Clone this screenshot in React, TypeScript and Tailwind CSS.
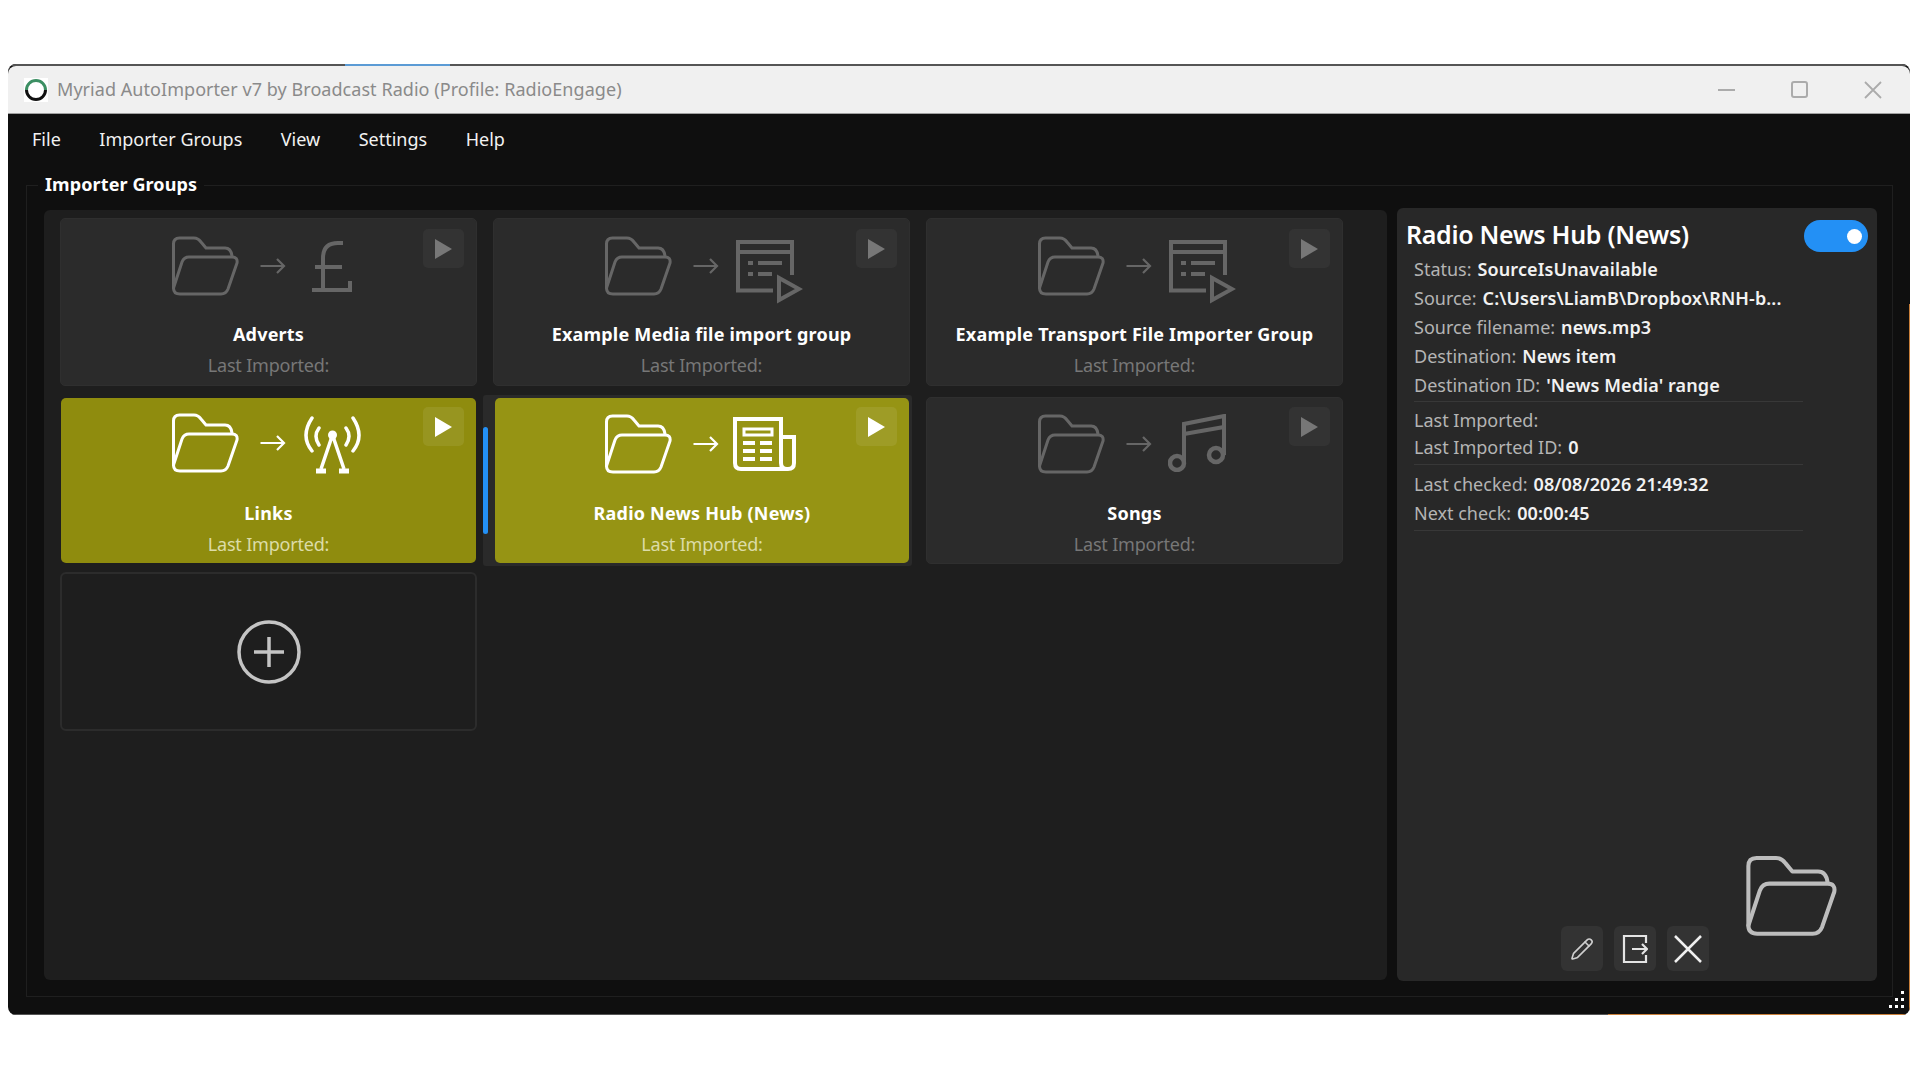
import React from "react";
import { Pencil } from "lucide-react";

function Folder({ className }: { className?: string }) {
  return (
    <svg viewBox="0 0 68 61" className={className} fill="none" stroke="currentColor" strokeWidth="3" strokeLinejoin="round" strokeLinecap="round">
      <path d="M2.500 52 V8 Q2.500 2 8.500 2 H23 Q27 2 30 6 L35 12 H54 Q60 12 61 20" />
      <path d="M18 21 H61 Q67 21 66 27 L57 53 Q55 58 50 58 H9 Q2.500 58 2.500 52 L11 26 Q13 21 18 21 Z" />
    </svg>
  );
}

function Arrow() {
  return (
    <svg viewBox="0 0 26 18" className="w-[26px] h-[18px]" fill="none" stroke="currentColor" strokeWidth="2.200">
      <path d="M0.500 9 H24 M17 2 L24 9 L17 16" />
    </svg>
  );
}

function Pound() {
  return (
    <svg viewBox="0 0 40 53" className="w-[40px] h-[53px]" fill="none" stroke="currentColor" strokeWidth="4">
      <path d="M31 3 H26 Q11 3 11 18 V50" />
      <path d="M3 27 H30" />
      <path d="M0 50 H38 V41" />
    </svg>
  );
}

function Media() {
  return (
    <svg viewBox="0 0 67 64" className="w-[67px] h-[64px]" fill="none" stroke="currentColor" strokeWidth="4">
      <path d="M37 50.500 H2 V2 H56 V35" />
      <path d="M2 12 H56" />
      <path d="M12 23 H17 M22 23 H46 M12 34 H17 M22 34 H36" />
      <path d="M43 38 V60 L63 49 Z" />
    </svg>
  );
}

function News() {
  return (
    <svg viewBox="0 0 63 54" className="w-[63px] h-[54px]" fill="none" stroke="currentColor" strokeWidth="4">
      <path d="M48 20 H61 V46 Q61 52 55 52 H8 Q2 52 2 46 V2 H48 V46 Q48 52 54 52" />
      <path d="M11 12 H39 V18 H11 Z" strokeWidth="3" />
      <path d="M10 26 H22 M27 26 H39 M10 34 H22 M27 34 H39 M10 42 H22 M27 42 H39" strokeWidth="4" />
    </svg>
  );
}

function Antenna() {
  return (
    <svg viewBox="0 0 59 58" className="w-[59px] h-[58px]" fill="none" stroke="currentColor" strokeWidth="3">
      <path d="M9 2 Q-3 20 9 35 M16 12 Q10 20 16 29 M50 2 Q62 20 50 35 M43 12 Q49 20 43 29" strokeLinecap="round" strokeWidth="3.500" />
      <circle cx="29.500" cy="19" r="4.500" fill="currentColor" stroke="none" />
      <path d="M29.500 19 L18 53 M29.500 19 L41 53" strokeWidth="3.500" />
      <path d="M13 55 H23 M36 55 H46" strokeWidth="5" />
    </svg>
  );
}

function Music() {
  return (
    <svg viewBox="0 0 58 58" className="w-[58px] h-[58px]" fill="none" stroke="currentColor" strokeWidth="4">
      <path d="M16 49 V10 L56 2 V41" />
      <path d="M16 20 L56 13" />
      <circle cx="9" cy="49" r="7" strokeWidth="4.500" />
      <circle cx="48" cy="41" r="7" strokeWidth="4.500" />
    </svg>
  );
}

function Play({ active }: { active: boolean }) {
  return (
    <div className={active ? "w-[41px] h-[39px] rounded-[5px] bg-white/8 flex items-center justify-center" : "w-[41px] h-[39px] rounded-[5px] bg-[#333333] flex items-center justify-center"}>
      <svg viewBox="0 0 17 20" className={active ? "w-[17px] h-[20px] text-white" : "w-[17px] h-[20px] text-[#777777]"} fill="currentColor">
        <path d="M0 0 L17 10 L0 20 Z" />
      </svg>
    </div>
  );
}

type Fit = { wrap: string; title: string; play: string };

const ROW_ONE: Fit = { wrap: "flex flex-col items-center h-full pt-[17px] text-[#666666]", title: "mt-[1px]", play: "absolute top-[10px] right-[12px]" };
const LINKS: Fit = { wrap: "flex flex-col items-center h-full pt-[15px] text-white", title: "mt-[3px]", play: "absolute top-[9px] right-[12px]" };
const NEWS: Fit = { wrap: "flex flex-col items-center h-full pt-[16px] text-white", title: "mt-[2px]", play: "absolute top-[9px] right-[12px]" };
const SONGS: Fit = { wrap: "flex flex-col items-center h-full pt-[16px] text-[#666666]", title: "mt-[2px]", play: "absolute top-[9px] right-[12px]" };

function CardBody({ name, icon, active, fit, inset }: { name: string; icon: React.ReactNode; active: boolean; fit: Fit; inset: string }) {
  return (
    <>
      <div className={fit.play}>
        <Play active={active} />
      </div>
      <div className={fit.wrap}>
        <div className={"h-[82px] w-full flex items-start " + inset}>
          <Folder className="w-[68px] h-[61px]" />
          <div className="ml-[21px] mt-[21px]">
            <Arrow />
          </div>
          {icon}
        </div>
        <div className={fit.title + " h-[30px] leading-[30px] text-[18px] font-bold text-white tracking-[0.2px]"}>{name}</div>
        <div className={active ? "mt-[1px] h-[30px] leading-[30px] text-[18px] text-[#dcdca8] tracking-[-0.2px]" : "mt-[1px] h-[30px] leading-[30px] text-[18px] text-[#777777] tracking-[-0.2px]"}>
          Last Imported:
        </div>
      </div>
    </>
  );
}

function Row({ label, value }: { label: string; value?: string }) {
  return (
    <div className="flex h-[29px] items-center text-[18px]">
      <span className="text-[#b4b4b4] mr-[6px]">{label}</span>
      {value && <span className="font-semibold text-[#f2f2f2] tracking-[0.1px]">{value}</span>}
    </div>
  );
}

export default function App() {
  const idle = "relative h-[168px] rounded-[5px] bg-[#2b2b2b] border border-[#2f2f2f]";
  return (
    <div className="w-[1920px] h-[1080px] bg-white pt-[64px] pl-[8px] overflow-hidden font-['Noto_Sans',sans-serif]">
      <div className="relative w-[1902px] h-[951px] bg-[#0f0f0f] rounded-[8px] flex flex-col overflow-hidden">
        <div className="flex h-[2px] bg-[#555555] pl-[337px] shrink-0">
          <div className="w-[105px] bg-[#5b9bd5]" />
        </div>
        <div className="h-[48px] shrink-0 rounded-t-[8px] bg-[#f0f0f0] border-b border-[#a0a0a0] flex items-center pl-[16px]">
          <svg viewBox="0 0 24 24" className="w-[24px] h-[24px] mr-[9px]" fill="none" strokeWidth="3">
            <rect width="24" height="24" fill="#ffffff" />
            <path d="M2.500 12 A9.500 9.500 0 0 1 21.500 12" stroke="#3c8f63" />
            <path d="M21.500 12 A9.500 9.500 0 0 1 2.500 12" stroke="#111111" />
          </svg>
          <span className="text-[18px] text-[#8a8a8a] tracking-[0.05px]">Myriad AutoImporter v7 by Broadcast Radio (Profile: RadioEngage)</span>
          <div className="ml-auto flex items-center text-[#ababab]">
            <svg viewBox="0 0 18 18" className="w-[18px] h-[18px]" fill="none" stroke="currentColor" strokeWidth="2"><path d="M0 9 H17" /></svg>
            <svg viewBox="0 0 18 18" className="w-[18px] h-[18px] ml-[55px]" fill="none" stroke="currentColor" strokeWidth="2"><rect x="1" y="1" width="15" height="15" rx="2" /></svg>
            <svg viewBox="0 0 18 18" className="w-[18px] h-[18px] ml-[55px] mr-[28px]" fill="none" stroke="currentColor" strokeWidth="1.800"><path d="M1 1 L17 17 M17 1 L1 17" /></svg>
          </div>
        </div>

        <div className="h-[51px] shrink-0 flex items-center pl-[24px] text-[18px] text-[#f2f2f2] gap-x-[38.500px]">
          <span>File</span>
          <span>Importer Groups</span>
          <span>View</span>
          <span>Settings</span>
          <span>Help</span>
        </div>

        <div className="relative mx-[18px] mt-[20px] w-[1867px] h-[812px] border border-[#1f1f1f] flex gap-x-[10px] pl-[17px] pt-[22px]">
          <div className="absolute -top-[17px] left-[11px] px-[7px] bg-[#0f0f0f] h-[30px] leading-[30px] text-[18px] font-bold text-white tracking-[0.1px]">Importer Groups</div>

          <div className="w-[1343px] h-[770px] mt-[2px] rounded-[6px] bg-[#1e1e1e] pl-[16px] pt-[8px]">
            <div className="grid grid-cols-[417px_417px_417px] grid-rows-[179px_175px_160px] gap-x-[16px]">
              <div className={idle}>
                <CardBody name="Adverts" active={false} fit={ROW_ONE} inset="pl-[110px]" icon={<div className="ml-[26px] mt-[4px]"><Pound /></div>} />
              </div>
              <div className={idle}>
                <CardBody name="Example Media file import group" active={false} fit={ROW_ONE} inset="pl-[110px]" icon={<div className="ml-[17px] mt-[4px]"><Media /></div>} />
              </div>
              <div className={idle}>
                <CardBody name="Example Transport File Importer Group" active={false} fit={ROW_ONE} inset="pl-[110px]" icon={<div className="ml-[17px] mt-[4px]"><Media /></div>} />
              </div>

              <div className="relative mx-[1px] mt-[1px] h-[165px] rounded-[5px] bg-[#8f8c0e]">
                <CardBody name="Links" active fit={LINKS} inset="pl-[110px]" icon={<div className="ml-[17px] mt-[3px]"><Antenna /></div>} />
              </div>
              <div className="relative -ml-[10px] -mr-[2px] -mt-[2px] h-[171px] rounded-[3px] bg-[#2a2a2a] pl-[12px] pr-[3px] pt-[3px]">
                <div className="absolute left-[0px] top-[32px] w-[5px] h-[107px] rounded-full bg-[#2390f5]" />
                <div className="relative h-[165px] rounded-[5px] bg-[#969414]">
                  <CardBody name="Radio News Hub (News)" active fit={NEWS} inset="pl-[109px]" icon={<div className="ml-[14px] mt-[3px]"><News /></div>} />
                </div>
              </div>
              <div className="relative h-[167px] rounded-[5px] bg-[#2b2b2b] border border-[#2f2f2f]">
                <CardBody name="Songs" active={false} fit={SONGS} inset="pl-[110px]" icon={<div className="ml-[16px]"><Music /></div>} />
              </div>

              <div className="h-[159px] rounded-[6px] border-2 border-[#2c2c2c] flex items-center justify-center">
                <svg viewBox="0 0 64 64" className="w-[64px] h-[64px] text-[#c4c4c4]" fill="none" stroke="currentColor" strokeWidth="3.500">
                  <circle cx="32" cy="32" r="30" />
                  <path d="M17 32 H47 M32 17 V47" />
                </svg>
              </div>
            </div>
          </div>

          <div className="relative w-[480px] h-[773px] rounded-[6px] bg-[#282828] pl-[9px] pt-[8px]">
            <div className="h-[36px] leading-[36px] text-[25px] font-semibold text-white tracking-[-0.3px]">Radio News Hub (News)</div>
            <div className="absolute top-[12px] right-[9px] w-[64px] h-[32px] rounded-full bg-[#2390f5] flex items-center justify-end pr-[6px]">
              <div className="w-[15px] h-[15px] rounded-full bg-white" />
            </div>
            <div className="pl-[8px] w-[397px] mt-[3px]">
              <Row label="Status:" value="SourceIsUnavailable" />
              <Row label="Source:" value="C:\Users\LiamB\Dropbox\RNH-b..." />
              <Row label="Source filename:" value="news.mp3" />
              <Row label="Destination:" value="News item" />
              <Row label="Destination ID:" value="'News Media' range" />
              <div className="h-[1px] bg-[#383838] mt-[1px] mb-[1px]" />
              <div className="pt-[3px] pb-[2px]">
                <Row label="Last Imported:" />
                <div className="-mt-[2px]">
                  <Row label="Last Imported ID:" value="0" />
                </div>
              </div>
              <div className="h-[1px] bg-[#383838] mb-[1px]" />
              <div className="pt-[4px]">
                <Row label="Last checked:" value="08/08/2026 21:49:32" />
                <Row label="Next check:" value="00:00:45" />
              </div>
              <div className="h-[1px] bg-[#383838] mt-[2px]" />
            </div>

            <div className="absolute right-[168px] bottom-[10px] flex gap-x-[11px]">
              <div className="w-[42px] h-[45px] rounded-[6px] bg-[#333333] flex items-center justify-center">
                <Pencil className="w-[24px] h-[24px] text-[#cfcfcf]" strokeWidth={1.6} />
              </div>
              <div className="w-[42px] h-[45px] rounded-[6px] bg-[#333333] flex items-center justify-center">
                <svg viewBox="0 0 26 30" className="w-[26px] h-[30px] text-[#e4e4e4]" fill="none" stroke="currentColor" strokeWidth="2.200">
                  <path d="M24 9 V2 H2 V28 H24 V21" />
                  <path d="M10 15 H25 M20 10 L25 15 L20 20" />
                </svg>
              </div>
              <div className="w-[42px] h-[45px] rounded-[6px] bg-[#333333] flex items-center justify-center">
                <svg viewBox="0 0 28 28" className="w-[28px] h-[28px] text-[#f0f0f0]" fill="none" stroke="currentColor" strokeWidth="2.500">
                  <path d="M1 1 L27 27 M27 1 L1 27" />
                </svg>
              </div>
            </div>
            <div className="absolute right-[40px] bottom-[43px] text-[#bdbdbd]">
              <Folder className="w-[92px] h-[83px]" />
            </div>
          </div>
        </div>

        <svg viewBox="0 0 18 18" className="absolute right-[5px] bottom-[6px] w-[18px] h-[18px]" fill="#ffffff">
          <rect x="14" y="0" width="3" height="3" />
          <rect x="8" y="7" width="3" height="3" />
          <rect x="14" y="7" width="3" height="3" />
          <rect x="2" y="14" width="3" height="3" />
          <rect x="8" y="14" width="3" height="3" />
          <rect x="14" y="14" width="3" height="3" />
        </svg>
        <div className="absolute left-0 bottom-0 w-full h-[1px] bg-[#555555]" />
        <div className="absolute left-[1600px] right-0 bottom-0 h-[1px] bg-[#c97f3a]" />
        <div className="absolute right-0 top-[240px] bottom-0 w-[1px] bg-[#c97f3a]" />
      </div>
    </div>
  );
}
